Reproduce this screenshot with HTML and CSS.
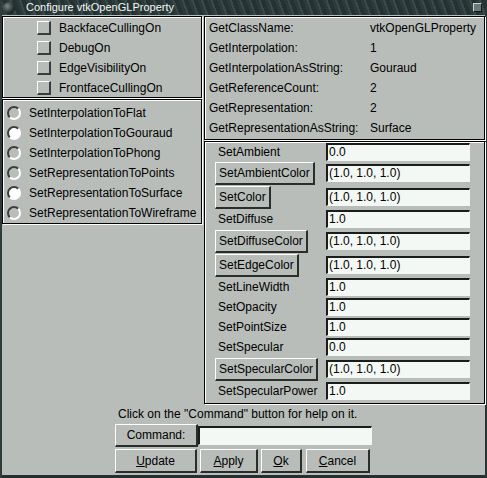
FILE: index.html
```html
<!DOCTYPE html>
<html>
<head>
<meta charset="utf-8">
<link rel="stylesheet" href="styles.css">
</head>
<body>
<div class="window">
  <div class="titlebar">
    <span class="tb-icon"></span>
    <span class="tb-title">Configure vtkOpenGLProperty</span>
    <span class="tb-max"></span>
  </div>
  <div class="content">
    <div class="leftcol">
      <div class="frame checks">
        <div class="crow"><span class="cbox"></span><span>BackfaceCullingOn</span></div>
        <div class="crow"><span class="cbox"></span><span>DebugOn</span></div>
        <div class="crow"><span class="cbox"></span><span>EdgeVisibilityOn</span></div>
        <div class="crow"><span class="cbox"></span><span>FrontfaceCullingOn</span></div>
      </div>
      <div class="frame radios">
        <div class="rrow"><span class="radio"></span><span>SetInterpolationToFlat</span></div>
        <div class="rrow"><span class="radio on"></span><span>SetInterpolationToGouraud</span></div>
        <div class="rrow"><span class="radio"></span><span>SetInterpolationToPhong</span></div>
        <div class="rrow"><span class="radio"></span><span>SetRepresentationToPoints</span></div>
        <div class="rrow"><span class="radio on"></span><span>SetRepresentationToSurface</span></div>
        <div class="rrow"><span class="radio"></span><span>SetRepresentationToWireframe</span></div>
      </div>
    </div>
    <div class="rightcol">
      <div class="frame info">
        <div class="irow"><span class="ilabel">GetClassName:</span><span>vtkOpenGLProperty</span></div>
        <div class="irow"><span class="ilabel">GetInterpolation:</span><span>1</span></div>
        <div class="irow"><span class="ilabel">GetInterpolationAsString:</span><span>Gouraud</span></div>
        <div class="irow"><span class="ilabel">GetReferenceCount:</span><span>2</span></div>
        <div class="irow"><span class="ilabel">GetRepresentation:</span><span>2</span></div>
        <div class="irow"><span class="ilabel">GetRepresentationAsString:</span><span>Surface</span></div>
      </div>
      <div class="frame setters">
        <div class="srow"><span class="slabel">SetAmbient</span><span class="entry">0.0</span></div>
        <div class="srow tall"><span class="btn">SetAmbientColor</span><span class="entry">(1.0, 1.0, 1.0)</span></div>
        <div class="srow tall"><span class="btn">SetColor</span><span class="entry">(1.0, 1.0, 1.0)</span></div>
        <div class="srow"><span class="slabel">SetDiffuse</span><span class="entry">1.0</span></div>
        <div class="srow tall"><span class="btn">SetDiffuseColor</span><span class="entry">(1.0, 1.0, 1.0)</span></div>
        <div class="srow tall"><span class="btn">SetEdgeColor</span><span class="entry">(1.0, 1.0, 1.0)</span></div>
        <div class="srow"><span class="slabel">SetLineWidth</span><span class="entry">1.0</span></div>
        <div class="srow"><span class="slabel">SetOpacity</span><span class="entry">1.0</span></div>
        <div class="srow"><span class="slabel">SetPointSize</span><span class="entry">1.0</span></div>
        <div class="srow"><span class="slabel">SetSpecular</span><span class="entry">0.0</span></div>
        <div class="srow tall"><span class="btn">SetSpecularColor</span><span class="entry">(1.0, 1.0, 1.0)</span></div>
        <div class="srow"><span class="slabel">SetSpecularPower</span><span class="entry">1.0</span></div>
      </div>
    </div>
  </div>
  <div class="bottom">
    <div class="msg">Click on the "Command" button for help on it.</div>
    <div class="cmdrow">
      <span class="btn cmdbtn">Command:</span>
      <span class="entry cmdentry"></span>
    </div>
    <div class="btnrow">
      <span class="btn act w-update"><u>U</u>pdate</span>
      <span class="btn act w-apply"><u>A</u>pply</span>
      <span class="btn act w-ok"><u>O</u>k</span>
      <span class="btn act w-cancel"><u>C</u>ancel</span>
    </div>
  </div>
  <div class="bottomedge"></div>
</div>
</body>
</html>
```

FILE: styles.css
```css
* { box-sizing: border-box; }
html, body { margin: 0; padding: 0; }
body {
  background: #1f2b2b;
  font-family: "Liberation Sans", Arial, sans-serif;
  font-size: 12px;
  color: #000;
}
.window {
  width: 487px;
  height: 478px;
  background: #b9bdb9;
  display: flex;
  flex-direction: column;
  border-left: 2px solid #2f3a3a;
  border-right: 2px solid #2a3535;
}
.titlebar {
  height: 15px;
  flex: none;
  background: repeating-linear-gradient(70deg, #2b3b3b 0 3px, #3a4a4a 3px 5px, #243232 5px 9px);
  display: flex;
  align-items: center;
}
.tb-icon {
  width: 12px;
  height: 12px;
  border-radius: 50%;
  margin-left: 1px;
  background: radial-gradient(circle at 35% 35%, #7a8585, #1a2222 70%);
}
.tb-title {
  color: #f4f6f4;
  font-size: 11px;
  margin-left: 11px;
  line-height: 15px;
}
.tb-max {
  margin-left: auto;
  margin-right: 3px;
  width: 9px;
  height: 9px;
  background: #6c7a7a;
  border-top: 1px solid #c8d0d0;
  border-left: 1px solid #c8d0d0;
  border-right: 1px solid #101818;
  border-bottom: 1px solid #101818;
}
.content {
  display: flex;
  flex: none;
  height: 389px;
  padding-top: 1px;
}
.frame {
  border: 1px solid #000;
  box-shadow: inset 1px 1px 0 #fff, 1px 1px 0 #fff;
}
.leftcol {
  width: 200px;
  flex: none;
  display: flex;
  flex-direction: column;
  gap: 1px;
}
.checks {
  height: 82px;
  padding-top: 1px;
}
.crow {
  height: 20px;
  display: flex;
  align-items: center;
  padding-left: 34px;
}
.cbox {
  width: 14px;
  height: 14px;
  border-top: 1px solid #fff;
  border-left: 1px solid #fff;
  border-right: 2px solid #3a3e3a;
  border-bottom: 2px solid #3a3e3a;
  margin-right: 8px;
}
.radios {
  height: 125px;
  padding-top: 3px;
}
.rrow {
  height: 20px;
  display: flex;
  align-items: center;
  padding-left: 4px;
}
.radio {
  width: 14px;
  height: 14px;
  border-radius: 50%;
  border: 2px solid;
  border-color: #3a3e3a #fff #fff #3a3e3a;
  margin-right: 8px;
}
.radio.on { background: #fff; }
.rightcol {
  width: 281px;
  flex: none;
  margin-left: 2px;
  display: flex;
  flex-direction: column;
  gap: 1px;
}
.info {
  height: 124px;
  padding-top: 1px;
}
.irow {
  height: 20px;
  display: flex;
  align-items: center;
  padding-left: 4px;
}
.ilabel { width: 161px; }
.setters {
  height: 263px;
  padding: 0 0 0 10px;
}
.srow {
  height: 20px;
  display: flex;
  align-items: center;
}
.srow:first-child { height: 19px; }
.srow.tall { height: 24px; }
.slabel {
  width: 109px;
  padding-left: 3px;
}
.srow .btn { margin-right: auto; }
.srow .entry { margin-left: auto; margin-right: 14px; }
.entry {
  width: 144px;
  height: 18px;
  background: #f4f8f4;
  border-top: 2px solid #1a1e1a;
  border-left: 2px solid #1a1e1a;
  border-right: 1px solid #f4f8f4;
  border-bottom: 1px solid #f4f8f4;
  padding-left: 1px;
  line-height: 15px;
  display: block;
}
.btn {
  display: inline-flex;
  align-items: center;
  justify-content: center;
  height: 23px;
  padding: 0 3px;
  background: #b9bdb9;
  border-top: 1px solid #fff;
  border-left: 1px solid #fff;
  border-right: 2px solid #2a2e2a;
  border-bottom: 2px solid #2a2e2a;
}
.bottom {
  flex: none;
  display: flex;
  flex-direction: column;
  align-items: flex-start;
  padding-top: 2px;
}
.msg {
  height: 17px;
  line-height: 16px;
  margin-left: 116px;
}
.cmdrow {
  display: flex;
  align-items: center;
  height: 24px;
  margin-left: 113px;
}
.cmdbtn {
  width: 83px;
  height: 23px;
}
.cmdentry {
  width: 174px;
  height: 19px;
  border-top: 2px solid #1a1e1a;
  border-left: 2px solid #1a1e1a;
}
.btnrow {
  display: flex;
  margin-top: 2px;
  margin-left: 113px;
}
.btnrow .btn { height: 24px; }
.w-update { width: 82px; }
.w-apply { width: 58px; margin-left: 3px; }
.w-ok { width: 41px; margin-left: 3px; }
.w-cancel { width: 64px; margin-left: 4px; }
.bottomedge {
  margin-top: auto;
  height: 3px;
  background: #243030;
}
```
